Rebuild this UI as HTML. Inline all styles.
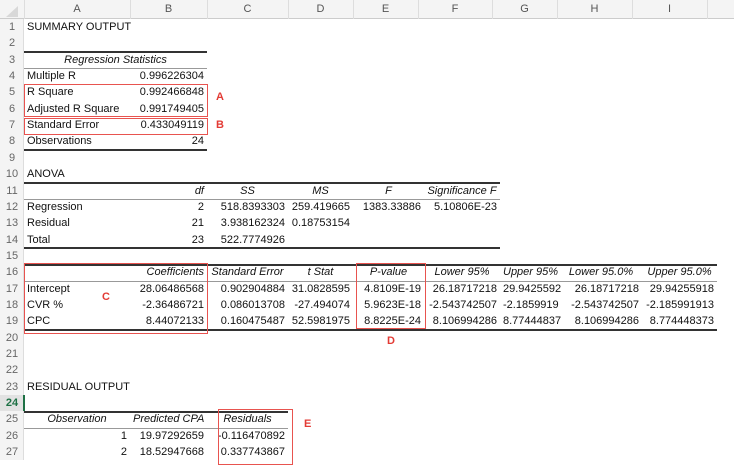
<!DOCTYPE html>
<html><head><meta charset="utf-8"><style>
body{margin:0;width:734px;height:460px;overflow:hidden;background:#fff;font-family:"Liberation Sans",sans-serif;font-size:11px;color:#111;position:relative}
div{position:absolute;white-space:nowrap}
.t{height:16px;line-height:16px;padding:0 3px;box-sizing:border-box;overflow:visible}
.r{text-align:right}.ce{text-align:center}.it{font-style:italic}
.a{left:24px;width:106px}.b{left:130px;width:77px}.c{left:207px;width:81px}.d{left:288px;width:65px}.e{left:353px;width:71px}.f{left:424px;width:76px}.g{left:500px;width:60px}.h{left:560px;width:82px}.i{left:642px;width:75px}
.rn{left:0;width:24px;text-align:center;color:#666;height:16px;line-height:16px;font-size:11px}
.hl{height:2px;background:#333}.tl{height:1px;background:#999}
.box{border:1px solid #e8534f;box-sizing:border-box}
.lab{color:#e33b35;font-weight:bold;font-size:11px}
.hd{top:0;height:19px;line-height:19px;text-align:center;color:#555;font-size:11px}
.sep{top:0;width:1px;height:19px;background:#ddd}
</style></head><body>
<div style="left:0;top:0;width:734px;height:19px;background:#f4f4f4;border-bottom:1px solid #ccc;box-sizing:border-box"></div>
<div style="left:0;top:19px;width:24px;height:441px;background:#f4f4f4;border-right:1px solid #ddd;box-sizing:border-box"></div>
<div style="left:6px;top:6px;width:0;height:0;border-left:12px solid transparent;border-bottom:11px solid #d8d8d8"></div>
<div class="sep" style="left:24px"></div><div class="sep" style="left:130px"></div><div class="sep" style="left:207px"></div><div class="sep" style="left:288px"></div><div class="sep" style="left:353px"></div><div class="sep" style="left:418px"></div><div class="sep" style="left:492px"></div><div class="sep" style="left:557px"></div><div class="sep" style="left:632px"></div><div class="sep" style="left:707px"></div>
<div class="hd" style="left:24px;width:106px">A</div><div class="hd" style="left:130px;width:77px">B</div><div class="hd" style="left:207px;width:81px">C</div><div class="hd" style="left:288px;width:65px">D</div><div class="hd" style="left:353px;width:65px">E</div><div class="hd" style="left:418px;width:74px">F</div><div class="hd" style="left:492px;width:65px">G</div><div class="hd" style="left:557px;width:75px">H</div><div class="hd" style="left:632px;width:75px">I</div>

<div class="rn" style="top:19px">1</div><div class="rn" style="top:35.35px">2</div><div class="rn" style="top:51.7px">3</div><div class="rn" style="top:68.05px">4</div><div class="rn" style="top:84.4px">5</div><div class="rn" style="top:100.75px">6</div><div class="rn" style="top:117.1px">7</div><div class="rn" style="top:133.45px">8</div><div class="rn" style="top:149.8px">9</div><div class="rn" style="top:166.15px">10</div><div class="rn" style="top:182.5px">11</div><div class="rn" style="top:198.85px">12</div><div class="rn" style="top:215.2px">13</div><div class="rn" style="top:231.55px">14</div><div class="rn" style="top:247.9px">15</div><div class="rn" style="top:264.25px">16</div><div class="rn" style="top:280.6px">17</div><div class="rn" style="top:296.95px">18</div><div class="rn" style="top:313.3px">19</div><div class="rn" style="top:329.65px">20</div><div class="rn" style="top:346px">21</div><div class="rn" style="top:362.35px">22</div><div class="rn" style="top:378.7px">23</div><div class="rn" style="top:395.05px;color:#1e7145;font-weight:bold;background:#e2e2e2">24</div><div class="rn" style="top:411.4px">25</div><div class="rn" style="top:427.75px">26</div><div class="rn" style="top:444.1px">27</div>
<div style="left:23px;top:395px;width:2px;height:16px;background:#1e7145"></div>

<div class="t a" style="top:19px">SUMMARY OUTPUT</div>
<div class="t it ce" style="left:24px;width:183px;top:51.7px">Regression Statistics</div>
<div class="t a" style="top:68.05px">Multiple R</div><div class="t b r" style="top:68.05px">0.996226304</div>
<div class="t a" style="top:84.4px">R Square</div><div class="t b r" style="top:84.4px">0.992466848</div>
<div class="t a" style="top:100.75px">Adjusted R Square</div><div class="t b r" style="top:100.75px">0.991749405</div>
<div class="t a" style="top:117.1px">Standard Error</div><div class="t b r" style="top:117.1px">0.433049119</div>
<div class="t a" style="top:133.45px">Observations</div><div class="t b r" style="top:133.45px">24</div>
<div class="hl" style="left:24px;width:183px;top:51px"></div><div class="tl" style="left:24px;width:183px;top:67.5px"></div><div class="hl" style="left:24px;width:183px;top:149px"></div>

<div class="t a" style="top:166.15px">ANOVA</div>
<div class="t b r it" style="top:182.5px">df</div><div class="t c ce it" style="top:182.5px">SS</div><div class="t d ce it" style="top:182.5px">MS</div><div class="t e ce it" style="top:182.5px">F</div><div class="t f ce it" style="top:182.5px">Significance F</div>
<div class="t a" style="top:198.85px">Regression</div><div class="t b r" style="top:198.85px">2</div><div class="t c r" style="top:198.85px">518.8393303</div><div class="t d r" style="top:198.85px">259.419665</div><div class="t e r" style="top:198.85px">1383.33886</div><div class="t f r" style="top:198.85px">5.10806E-23</div>
<div class="t a" style="top:215.2px">Residual</div><div class="t b r" style="top:215.2px">21</div><div class="t c r" style="top:215.2px">3.938162324</div><div class="t d r" style="top:215.2px">0.18753154</div>
<div class="t a" style="top:231.55px">Total</div><div class="t b r" style="top:231.55px">23</div><div class="t c r" style="top:231.55px">522.7774926</div>
<div class="hl" style="left:24px;width:476px;top:182px"></div><div class="tl" style="left:24px;width:476px;top:198.5px"></div><div class="hl" style="left:24px;width:476px;top:247px"></div>

<div class="t b r it" style="top:264.25px">Coefficients</div><div class="t c ce it" style="top:264.25px">Standard Error</div><div class="t d ce it" style="top:264.25px">t Stat</div><div class="t e ce it" style="top:264.25px">P-value</div><div class="t f ce it" style="top:264.25px">Lower 95%</div><div class="t g ce it" style="top:264.25px">Upper 95%</div><div class="t h ce it" style="top:264.25px">Lower 95.0%</div><div class="t i ce it" style="top:264.25px">Upper 95.0%</div>
<div class="t a" style="top:280.6px">Intercept</div><div class="t b r" style="top:280.6px">28.06486568</div><div class="t c r" style="top:280.6px">0.902904884</div><div class="t d r" style="top:280.6px">31.0828595</div><div class="t e r" style="top:280.6px">4.8109E-19</div><div class="t f r" style="top:280.6px">26.18717218</div><div class="t g r" style="top:280.6px">29.9425592</div><div class="t h r" style="top:280.6px">26.18717218</div><div class="t i r" style="top:280.6px">29.94255918</div>
<div class="t a" style="top:296.95px">CVR %</div><div class="t b r" style="top:296.95px">-2.36486721</div><div class="t c r" style="top:296.95px">0.086013708</div><div class="t d r" style="top:296.95px">-27.494074</div><div class="t e r" style="top:296.95px">5.9623E-18</div><div class="t f r" style="top:296.95px">-2.543742507</div><div class="t g r" style="top:296.95px">-2.1859919</div><div class="t h r" style="top:296.95px">-2.543742507</div><div class="t i r" style="top:296.95px">-2.185991913</div>
<div class="t a" style="top:313.3px">CPC</div><div class="t b r" style="top:313.3px">8.44072133</div><div class="t c r" style="top:313.3px">0.160475487</div><div class="t d r" style="top:313.3px">52.5981975</div><div class="t e r" style="top:313.3px">8.8225E-24</div><div class="t f r" style="top:313.3px">8.106994286</div><div class="t g r" style="top:313.3px">8.77444837</div><div class="t h r" style="top:313.3px">8.106994286</div><div class="t i r" style="top:313.3px">8.774448373</div>
<div class="hl" style="left:24px;width:693px;top:264px"></div><div class="tl" style="left:24px;width:693px;top:280.5px"></div><div class="hl" style="left:24px;width:693px;top:329px"></div>

<div class="t a" style="top:378.7px">RESIDUAL OUTPUT</div>
<div class="t a ce it" style="top:411.4px">Observation</div><div class="t b r it" style="top:411.4px">Predicted CPA</div><div class="t c ce it" style="top:411.4px">Residuals</div>
<div class="t b" style="left:24px;width:106px;top:427.75px;text-align:right">1</div><div class="t b r" style="top:427.75px">19.97292659</div><div class="t c r" style="top:427.75px">-0.116470892</div>
<div class="t b" style="left:24px;width:106px;top:444.1px;text-align:right">2</div><div class="t b r" style="top:444.1px">18.52947668</div><div class="t c r" style="top:444.1px">0.337743867</div>
<div class="hl" style="left:24px;width:264px;top:411px"></div><div class="tl" style="left:24px;width:264px;top:427.5px"></div>

<div class="box" style="left:24px;top:84px;width:184px;height:33px"></div>
<div class="box" style="left:24px;top:117.5px;width:184px;height:17px"></div>
<div class="box" style="left:24px;top:263px;width:184px;height:71px"></div>
<div class="box" style="left:356px;top:263px;width:70px;height:66px"></div>
<div class="box" style="left:218px;top:409px;width:75px;height:56px"></div>
<div class="lab" style="left:216px;top:91px">A</div>
<div class="lab" style="left:216px;top:119px">B</div>
<div class="lab" style="left:102px;top:291px">C</div>
<div class="lab" style="left:387px;top:335px">D</div>
<div class="lab" style="left:304px;top:418px">E</div>
</body></html>
